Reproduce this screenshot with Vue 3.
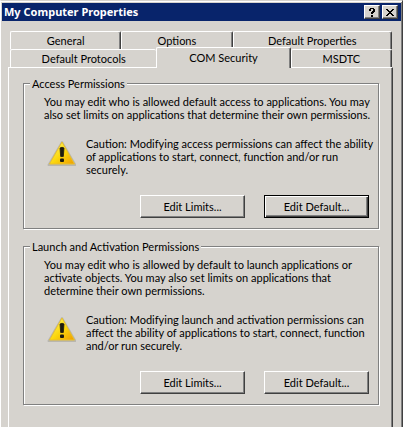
<script setup>
import { ref } from 'vue'

const backTabs = ['General', 'Options', 'Default Properties']
const frontTabs = ['Default Protocols', 'COM Security', 'MSDTC']
const active = ref('COM Security')

const groups = [
  {
    title: 'Access Permissions',
    text: 'You may edit who is allowed default access to applications. You may\nalso set limits on applications that determine their own permissions.',
    caution: 'Caution: Modifying access permissions can affect the ability\nof applications to start, connect, function and/or run\nsecurely.',
    isDefault: true,
  },
  {
    title: 'Launch and Activation Permissions',
    text: 'You may edit who is allowed by default to launch applications or\nactivate objects. You may also set limits on applications that\ndetermine their own permissions.',
    caution: 'Caution: Modifying launch and activation permissions can\naffect the ability of applications to start, connect, function\nand/or run securely.',
    isDefault: false,
  },
]
</script>

<template>
  <main class="dialog">
    <header class="titlebar">
      <h1 class="title">My Computer Properties</h1>
      <button class="caption" type="button" aria-label="Help">
        <svg width="6" height="9" viewBox="0 0 6 9" shape-rendering="crispEdges" aria-hidden="true">
          <path d="M1 0h4v1h1v3h-1v1h-1v1h-2v-2h1v-1h1v-2h-2v2h-2v-2h1zM2 7h2v2h-2z" />
        </svg>
      </button>
      <button class="caption" type="button" aria-label="Close">
        <svg width="8" height="7" viewBox="0 0 8 7" shape-rendering="crispEdges" aria-hidden="true">
          <path d="M0 0h2v1h1v1h2v-1h1v-1h2v1h-1v1h-1v1h-1v1h1v1h1v1h1v1h-2v-1h-1v-1h-2v1h-1v1h-2v-1h1v-1h1v-1h1v-1h-1v-1h-1v-1h-1z" />
        </svg>
      </button>
    </header>

    <div class="sheet">
      <nav class="tabs" role="tablist" aria-label="Property pages">
        <div class="row back">
          <button v-for="t in backTabs" :key="t" class="tab" type="button" role="tab" :aria-selected="active === t">{{ t }}</button>
        </div>
        <div class="row front">
          <button
            v-for="t in frontTabs"
            :key="t"
            class="tab"
            :class="{ active: active === t }"
            type="button"
            role="tab"
            :aria-selected="active === t"
          >{{ t }}</button>
        </div>
      </nav>

      <section class="panel" role="tabpanel" aria-label="COM Security">
        <fieldset v-for="g in groups" :key="g.title" class="group">
          <legend class="legend">{{ g.title }}</legend>
          <p class="text">{{ g.text }}</p>
          <div class="caution">
            <svg class="warn" width="32" height="30" viewBox="0 0 32 30" aria-hidden="true">
              <defs>
                <linearGradient id="warn-fill" x1="0" y1="0" x2="1" y2="1">
                  <stop offset="0.2" stop-color="#fff04a" />
                  <stop offset="0.55" stop-color="#fbd50c" />
                  <stop offset="1" stop-color="#ee9c00" />
                </linearGradient>
              </defs>
              <path d="M18 5 31.500 28H4.500z" fill="#aaa79f" stroke="#b9b6ae" stroke-width="2" stroke-linejoin="round" />
              <path d="M18 5 30.500 27H5.500z" fill="url(#warn-fill)" stroke="#e8c030" stroke-width="1" stroke-linejoin="round" />
              <path d="M16 11q2-1.500 4 0l-.7 8.500h-2.600z" fill="#1d1b10" stroke="#1d1b10" stroke-width=".8" />
              <rect x="16" y="21.500" width="4" height="3.500" rx="1" fill="#1d1b10" />
            </svg>
            <p class="caution-text">{{ g.caution }}</p>
          </div>
          <div class="actions">
            <button class="push" type="button">Edit Limits...</button>
            <button class="push" :class="{ default: g.isDefault }" type="button">Edit Default...</button>
          </div>
        </fieldset>
      </section>
    </div>
  </main>
</template>

<style>
body {
  background: #d6d3ce;
}
</style>

<style scoped>
.dialog {
  box-sizing: border-box;
  min-height: 100vh;
  padding: 2px 1px 0;
  display: flex;
  flex-direction: column;
  border-top: 1px solid #d6d3ce;
  border-left: 1px solid #fff;
  border-right: 1px solid #404040;
  box-shadow: inset 0 1px 0 #fff, inset -1px 0 0 #808080;
  background: #d6d3ce;
  color: #000;
  font: 11px/13px Lato, "Liberation Sans", sans-serif;
}
.titlebar {
  display: flex;
  align-items: center;
  height: 18px;
  padding: 0 3px 0 2px;
  background: #08246b;
}
.title {
  flex: 1;
  margin: 0;
  color: #fff;
  font: bold 11px/18px "Noto Sans", Tahoma, sans-serif;
}
.caption {
  display: flex;
  align-items: center;
  justify-content: center;
  width: 16px;
  height: 14px;
  margin-left: 2px;
  padding: 0;
  border: 1px solid;
  border-color: #fff #404040 #404040 #fff;
  box-shadow: inset -1px -1px 0 #808080;
  background: #d6d3ce;
}
.sheet {
  flex: 1;
  display: flex;
  flex-direction: column;
  padding: 10px 8px 0 6px;
}
.tabs {
  padding: 0 1px 0 2px;
}
.row {
  display: grid;
  height: 18px;
}
.back {
  grid-template-columns: 111fr 111fr 159fr;
}
.front {
  grid-template-columns: 146fr 134fr 101fr;
}
.tab {
  padding: 0;
  border: solid;
  border-width: 1px 1px 0;
  border-color: #fff #404040 #fff #fff;
  border-radius: 2px 2px 0 0;
  box-shadow: inset -1px 0 0 #808080;
  background: #d6d3ce;
  color: inherit;
  font: inherit;
}
.front .tab:first-child {
  border-right: 0;
  box-shadow: none;
}
.active {
  margin: -2px 0 -1px;
  padding-bottom: 2px;
  z-index: 1;
}
.panel {
  flex: 1;
  display: flex;
  flex-direction: column;
  gap: 10px;
  padding: 8px 13px 21px 14px;
  border: solid;
  border-width: 1px 1px 0;
  border-color: #fff #404040 #fff #fff;
  box-shadow: inset -1px 0 0 #808080;
}
.group {
  min-width: 0;
  margin: 0;
  padding: 4px 9px 10px 20px;
  border: 1px solid #808080;
  box-shadow: 1px 1px 0 #fff, inset 1px 1px 0 #fff;
}
.legend {
  margin-left: -14px;
  padding: 1px 2px;
  background: #d6d3ce;
}
.text,
.caution-text {
  margin: 0;
  white-space: pre;
}
.caution {
  display: flex;
  gap: 10px;
  margin-top: 16px;
}
.warn {
  flex: none;
}
.actions {
  display: flex;
  justify-content: flex-end;
  gap: 19px;
  margin-top: 19px;
}
.push {
  width: 105px;
  height: 23px;
  padding: 0;
  border: 1px solid;
  border-color: #fff #404040 #404040 #fff;
  box-shadow: inset -1px -1px 0 #808080;
  background: #d6d3ce;
  color: inherit;
  font: inherit;
}
.default {
  border-color: #000;
  box-shadow: inset 1px 1px 0 #fff, inset -1px -1px 0 #404040, inset -2px -2px 0 #808080;
}
</style>
